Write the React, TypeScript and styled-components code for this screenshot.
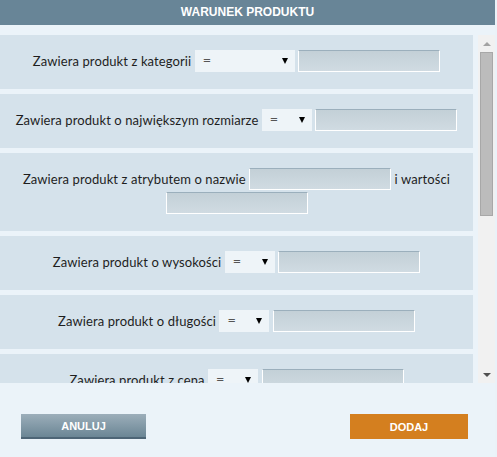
import { createGlobalStyle } from 'styled-components'
import styled from 'styled-components'

const GlobalStyle = createGlobalStyle`
  html, body {
    margin: 0;
    padding: 0;
    background-color: #eaf2f8;
  }
`

const Dialog = styled.div`
  width: 495px;
  height: 457px;
  display: flex;
  flex-direction: column;
  background-color: #ebf3f9;
  font-family: Lato, 'Open Sans', sans-serif;
`

const Header = styled.div`
  height: 25px;
  line-height: 25px;
  text-align: center;
  background-color: #688597;
  color: #fff;
  font-family: 'Liberation Sans', Arial, sans-serif;
  font-size: 12px;
  font-weight: bold;
`

const Body = styled.div`
  display: flex;
  gap: 5px;
  height: 348px;
  margin-top: 10px;
`

const List = styled.div`
  width: 473px;
  flex: none;
  display: flex;
  flex-direction: column;
  gap: 5px;
  overflow: hidden;
`

const Panel = styled.div`
  flex: none;
  padding: 14px 10px 16px;
  background-color: #d5e2eb;
  text-align: center;
  line-height: 24px;
  font-size: 13px;
  letter-spacing: 0.1px;
  color: #1e1e1e;
`

const Select = styled.span<{ $wide?: boolean }>`
  display: inline-flex;
  align-items: center;
  justify-content: space-between;
  box-sizing: border-box;
  width: ${p => (p.$wide ? 100 : 50)}px;
  height: 22px;
  padding: 0 7px 0 8px;
  margin: 1px 0;
  vertical-align: top;
  background-color: #eef4f8;
  font-family: 'DejaVu Sans', Verdana, sans-serif;
  font-size: 10px;
  letter-spacing: 0;
  line-height: 22px;
  color: #555;
  text-align: left;
`

const Caret = styled.span`
  width: 0;
  height: 0;
  border-left: 3px solid transparent;
  border-right: 3px solid transparent;
  border-top: 6px solid #000;
`

const Input = styled.span`
  display: inline-block;
  box-sizing: border-box;
  width: 142px;
  height: 22px;
  margin: 1px 0;
  vertical-align: top;
  border: 1px solid #fff;
  border-top-color: #9bafbc;
  background: linear-gradient(#c3d0d7, #d0dbe2);
`

const Scrollbar = styled.div`
  width: 17px;
  flex: none;
  display: flex;
  flex-direction: column;
  align-items: center;
  background-color: #f1f1f1;
`

const ArrowButton = styled.div`
  height: 17px;
  width: 17px;
  display: flex;
  align-items: center;
  justify-content: center;
`

const Arrow = styled.span<{ $down?: boolean; $color: string }>`
  width: 0;
  height: 0;
  border-left: 4px solid transparent;
  border-right: 4px solid transparent;
  ${p =>
    p.$down
      ? `border-top: 4px solid ${p.$color};`
      : `border-bottom: 4px solid ${p.$color};`}
`

const Thumb = styled.div`
  width: 13px;
  height: 164px;
  box-sizing: border-box;
  background-color: #bcbcbc;
  border: 1px solid #a8a8a8;
`

const Spacer = styled.div`
  flex: 1;
`

const Footer = styled.div`
  display: flex;
  justify-content: space-between;
  align-items: flex-start;
  padding: 31px 27px 0 21px;
`

const Button = styled.button<{ $primary?: boolean }>`
  height: 25px;
  width: ${p => (p.$primary ? 118 : 125)}px;
  padding: 0;
  border: none;
  box-sizing: border-box;
  font-family: 'Liberation Sans', Arial, sans-serif;
  font-size: 11px;
  font-weight: bold;
  color: #fff;
  cursor: pointer;
  background: ${p => (p.$primary ? '#d47f1f' : 'linear-gradient(#9caeba, #6b8695)')};
  border-bottom: ${p => (p.$primary ? 'none' : '2px solid #4d6576')};
`

const Field = ({ wide }: { wide?: boolean }) => (
  <>
    {' '}
    <Select $wide={wide}>
      =<Caret />
    </Select>{' '}
    <Input />
  </>
)

export default function App() {
  return (
    <>
      <GlobalStyle />
      <Dialog>
        <Header>WARUNEK PRODUKTU</Header>
        <Body>
          <List>
            <Panel>
              Zawiera produkt z kategorii
              <Field wide />
            </Panel>
            <Panel>
              Zawiera produkt o największym rozmiarze
              <Field />
            </Panel>
            <Panel>
              Zawiera produkt z atrybutem o nazwie <Input /> i wartości <Input />
            </Panel>
            <Panel>
              Zawiera produkt o wysokości
              <Field />
            </Panel>
            <Panel>
              Zawiera produkt o długości
              <Field />
            </Panel>
            <Panel>
              Zawiera produkt z cena
              <Field />
            </Panel>
          </List>
          <Scrollbar>
            <ArrowButton>
              <Arrow $color="#a3a3a3" />
            </ArrowButton>
            <Thumb />
            <Spacer />
            <ArrowButton>
              <Arrow $down $color="#505050" />
            </ArrowButton>
          </Scrollbar>
        </Body>
        <Footer>
          <Button>ANULUJ</Button>
          <Button $primary>DODAJ</Button>
        </Footer>
      </Dialog>
    </>
  )
}
